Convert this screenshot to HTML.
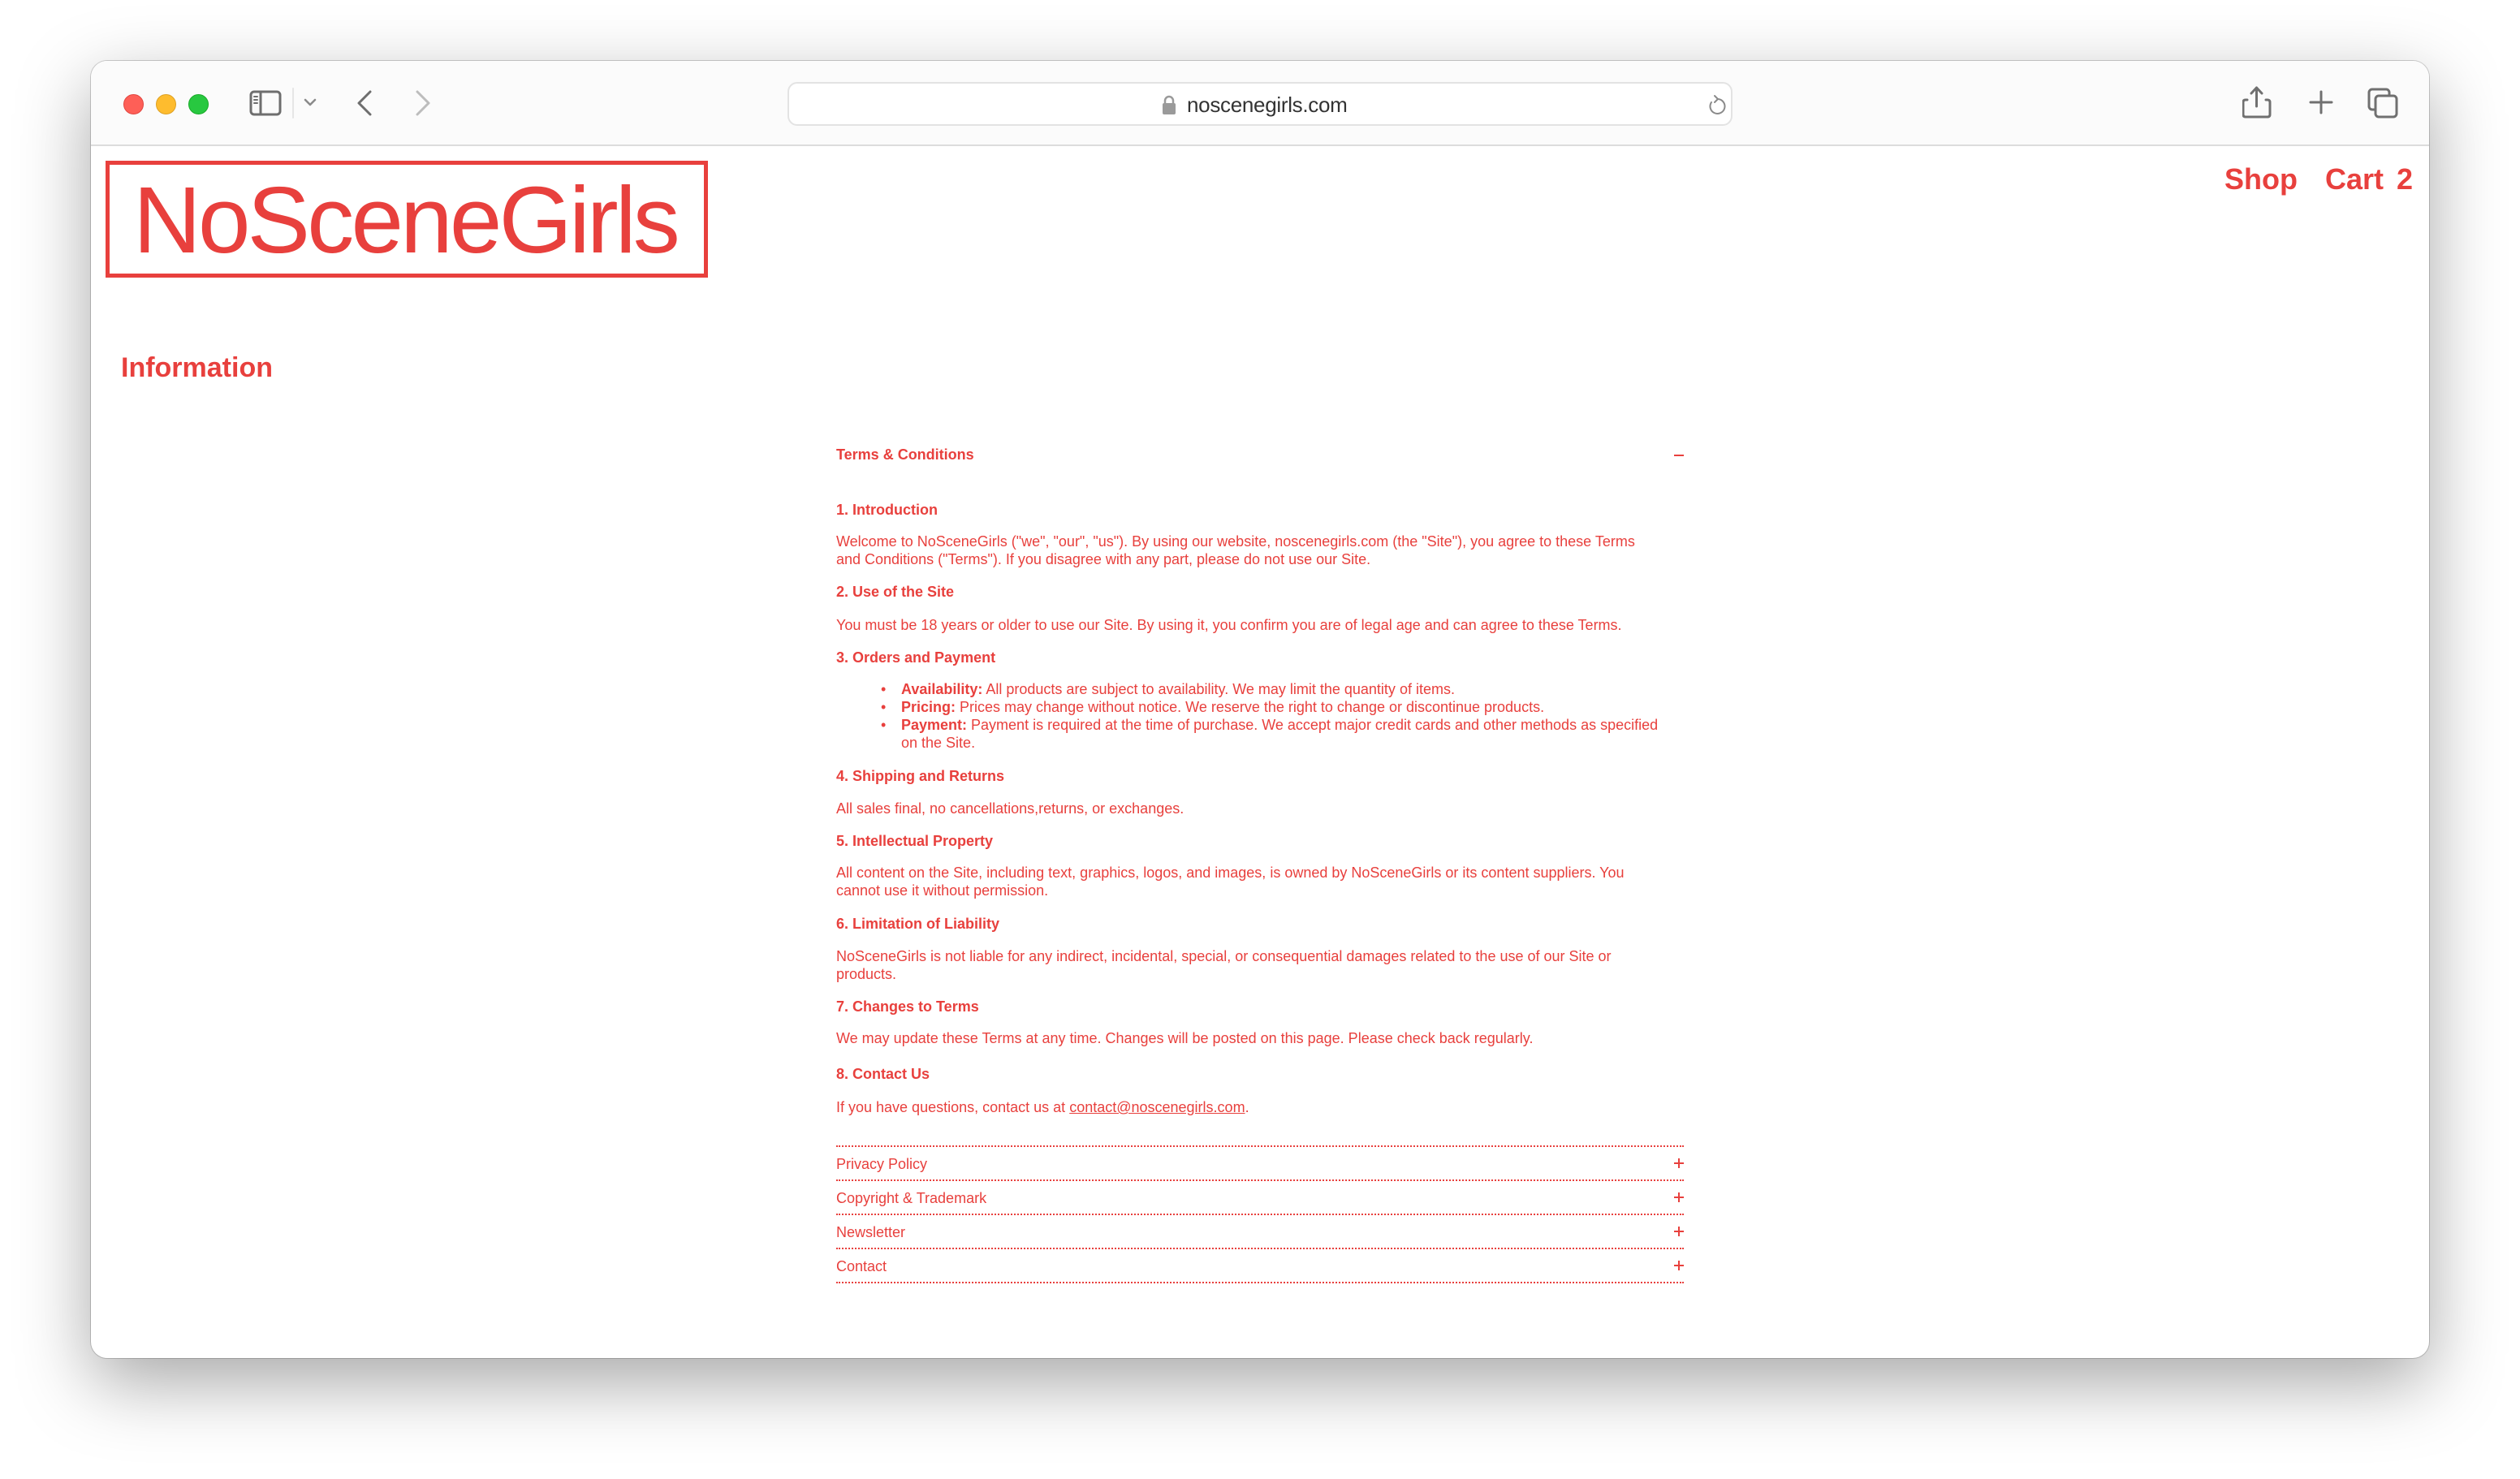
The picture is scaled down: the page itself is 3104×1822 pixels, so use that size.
<!DOCTYPE html>
<html><head><meta charset="utf-8"><style>
*{margin:0;padding:0;box-sizing:border-box}
html,body{width:3104px;height:1822px;background:#fff;overflow:hidden;font-family:"Liberation Sans",Arial,sans-serif}
.win{position:absolute;left:112px;top:75px;width:2880px;height:1598px;background:#fff;border-radius:20px;box-shadow:0 30px 90px rgba(0,0,0,.35),0 0 0 1px rgba(0,0,0,.18);overflow:hidden}
.bar{position:absolute;left:0;top:0;width:100%;height:105px;background:#fbfbfb;border-bottom:2px solid #dcdcdc}
.dot{position:absolute;top:41px;width:25px;height:25px;border-radius:50%}
.url{position:absolute;left:858px;top:26px;width:1164px;height:54px;border:2px solid #e3e3e3;border-radius:12px;background:#fff}
.url span{position:absolute;left:490px;top:11px;font-size:26px;color:#333;letter-spacing:-.3px}
.r{color:#e8403d}
.c{position:absolute;left:918px;width:1025px;font-size:18px;line-height:22px;color:#e8403d}
.h{font-weight:bold}
.row{position:absolute;left:918px;width:1044px;height:2px;border-top:2px dotted #e8403d}
.lbl{position:absolute;left:918px;font-size:18px;line-height:22px;color:#e8403d}
.plus{position:absolute;left:1950px;width:12px;height:12px}
.plus:before{content:"";position:absolute;left:0;top:5px;width:12px;height:2px;background:#e8403d}
.plus:after{content:"";position:absolute;left:5px;top:0;width:2px;height:12px;background:#e8403d}
</style></head><body>
<div class="win">
 <div class="bar">
  <div class="dot" style="left:40px;background:#fe5f57;border:1px solid #e14640"></div>
  <div class="dot" style="left:80px;background:#febc2e;border:1px solid #dea123"></div>
  <div class="dot" style="left:120px;background:#28c840;border:1px solid #1aab29"></div>
  <svg style="position:absolute;left:190px;top:30px" width="240" height="45" viewBox="190 30 240 45" fill="none" stroke="#6e6e6e" stroke-width="3" stroke-linecap="round" stroke-linejoin="round">
   <rect x="197" y="38" width="36" height="28" rx="4"/>
   <line x1="209" y1="38" x2="209" y2="66"/>
   <line x1="201" y1="44" x2="205" y2="44" stroke-width="2"/><line x1="201" y1="48" x2="205" y2="48" stroke-width="2"/><line x1="201" y1="52" x2="205" y2="52" stroke-width="2"/>
   <line x1="249" y1="34" x2="249" y2="70" stroke="#e6e6e6" stroke-width="2"/>
   <path d="M264 48 L270 54 L276 48" stroke="#8a8a8a" stroke-width="2.5"/>
   <path d="M344 38 L330 52 L344 66"/>
   <path d="M402 38 L416 52 L402 66" stroke="#bdbdbd"/>
  </svg>
  <div class="url">
   <svg style="position:absolute;left:459px;top:13px" width="18" height="26" viewBox="0 0 18 26"><path d="M4 12 V8 a5 5 0 0 1 10 0 V12" fill="none" stroke="#9a9a9a" stroke-width="2.5"/><rect x="1" y="11" width="16" height="14" rx="2" fill="#9a9a9a"/></svg>
   <span>noscenegirls.com</span>
   <svg style="position:absolute;left:1130px;top:13px" width="24" height="28" viewBox="0 0 24 28" fill="none" stroke="#8a8a8a" stroke-width="2" stroke-linecap="round"><path d="M14 6 A9 9 0 1 1 6 10"/><path d="M10 2 L14 6 L10 10"/></svg>
  </div>
  <svg style="position:absolute;left:2650px;top:28px" width="220" height="44" viewBox="2650 28 220 44" fill="none" stroke="#707070" stroke-width="3" stroke-linecap="round" stroke-linejoin="round">
   <path d="M2656 48 H2654 q-3 0 -3 3 V66 q0 3 3 3 H2681 q3 0 3 -3 V51 q0 -3 -3 -3 H2679"/>
   <path d="M2667.5 56 V33 M2661 40 L2667.5 33 L2674 40"/>
   <path d="M2734 51 H2760 M2747 38 V64"/>
  </svg>
  <svg style="position:absolute;left:2800px;top:30px" width="50" height="44" viewBox="0 0 50 44" fill="none" stroke="#707070" stroke-width="3"><rect x="6" y="5" width="25" height="25" rx="4"/><rect x="14" y="13" width="26" height="26" rx="4" fill="#fbfbfb"/></svg>
 </div>
 <div style="position:absolute;left:18px;top:123px;width:742px;height:144px;border:5px solid #e8403d"></div>
 <div class="r" style="position:absolute;left:52px;top:126px;font-size:116px;letter-spacing:-3.8px;line-height:140px">NoSceneGirls</div>
 <div class="r" style="position:absolute;left:37px;top:353px;font-size:34px;font-weight:bold;line-height:50px">Information</div>
 <div class="r" style="position:absolute;left:2628px;top:121px;font-size:36px;font-weight:bold;line-height:50px">Shop</div>
 <div class="r" style="position:absolute;left:2752px;top:121px;font-size:36px;font-weight:bold;line-height:50px;word-spacing:6px">Cart 2</div>

 <div class="c h" style="top:474px">Terms &amp; Conditions</div>
 <div style="position:absolute;left:1950px;top:485px;width:12px;height:2px;background:#e8403d"></div>
 <div class="c h" style="top:542px">1. Introduction</div>
 <div class="c" style="top:581px;width:1000px">Welcome to NoSceneGirls ("we", "our", "us"). By using our website, noscenegirls.com (the "Site"), you agree to these Terms and Conditions ("Terms"). If you disagree with any part, please do not use our Site.</div>
 <div class="c h" style="top:643px">2. Use of the Site</div>
 <div class="c" style="top:684px">You must be 18 years or older to use our Site. By using it, you confirm you are of legal age and can agree to these Terms.</div>
 <div class="c h" style="top:724px">3. Orders and Payment</div>
 <div class="c" style="top:763px">
  <div style="position:relative;padding-left:80px"><span style="position:absolute;left:55px">•</span><b>Availability:</b> All products are subject to availability. We may limit the quantity of items.</div>
  <div style="position:relative;padding-left:80px"><span style="position:absolute;left:55px">•</span><b>Pricing:</b> Prices may change without notice. We reserve the right to change or discontinue products.</div>
  <div style="position:relative;padding-left:80px"><span style="position:absolute;left:55px">•</span><b>Payment:</b> Payment is required at the time of purchase. We accept major credit cards and other methods as specified on the Site.</div>
 </div>
 <div class="c h" style="top:870px">4. Shipping and Returns</div>
 <div class="c" style="top:910px">All sales final, no cancellations,returns, or exchanges.</div>
 <div class="c h" style="top:950px">5. Intellectual Property</div>
 <div class="c" style="top:989px;width:1000px">All content on the Site, including text, graphics, logos, and images, is owned by NoSceneGirls or its content suppliers. You cannot use it without permission.</div>
 <div class="c h" style="top:1052px">6. Limitation of Liability</div>
 <div class="c" style="top:1092px;width:990px">NoSceneGirls is not liable for any indirect, incidental, special, or consequential damages related to the use of our Site or products.</div>
 <div class="c h" style="top:1154px">7. Changes to Terms</div>
 <div class="c" style="top:1193px">We may update these Terms at any time. Changes will be posted on this page. Please check back regularly.</div>
 <div class="c h" style="top:1237px">8. Contact Us</div>
 <div class="c" style="top:1278px">If you have questions, contact us at <span style="text-decoration:underline">contact@noscenegirls.com</span>.</div>

 <div class="row" style="top:1336px"></div>
 <div class="lbl" style="top:1348px">Privacy Policy</div><div class="plus" style="top:1352px"></div>
 <div class="row" style="top:1378px"></div>
 <div class="lbl" style="top:1390px">Copyright &amp; Trademark</div><div class="plus" style="top:1394px"></div>
 <div class="row" style="top:1420px"></div>
 <div class="lbl" style="top:1432px">Newsletter</div><div class="plus" style="top:1436px"></div>
 <div class="row" style="top:1462px"></div>
 <div class="lbl" style="top:1474px">Contact</div><div class="plus" style="top:1478px"></div>
 <div class="row" style="top:1504px"></div>
</div>
</body></html>
